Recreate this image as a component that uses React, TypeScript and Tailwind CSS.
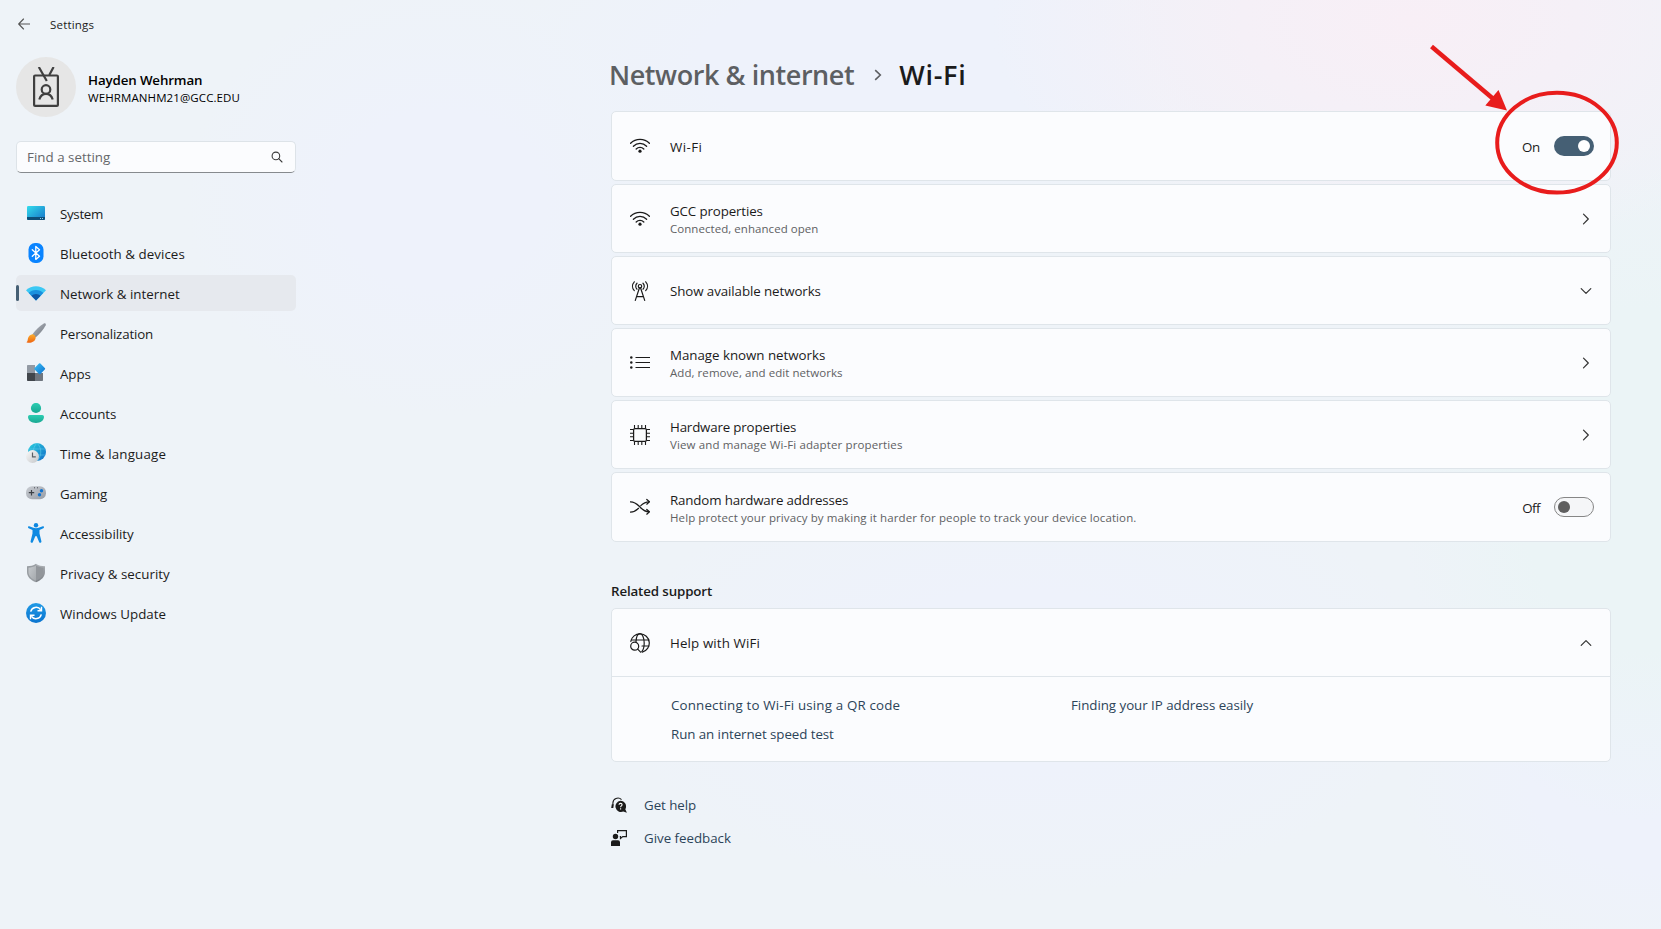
import type { ReactNode } from "react";

type NavItem = { label: string; track: string; icon: ReactNode; active?: boolean };

const Icon20 = ({ children, className = "" }: { children: ReactNode; className?: string }) => (
  <svg width="20" height="20" viewBox="0 0 20 20" fill="none" className={`shrink-0 ${className}`}>
    {children}
  </svg>
);

const SystemIcon = (
  <Icon20>
    <defs>
      <linearGradient id="sysG" x1="0" y1="0" x2="1" y2="1">
        <stop offset="0" stopColor="#33dcec" />
        <stop offset="1" stopColor="#1673c9" />
      </linearGradient>
    </defs>
    <rect x="1" y="3" width="18" height="14" rx="1.2" fill="url(#sysG)" />
    <path d="M1 14h18v1.8A1.2 1.2 0 0 1 17.800 17H2.200A1.200 1.200 0 0 1 1 15.800z" fill="#0e4f79" />
    <path d="M14 15.500h1M16 15.500h1" stroke="#8fd0f0" strokeWidth="1" />
  </Icon20>
);

const BluetoothIcon = (
  <Icon20>
    <rect x="2.500" y="0" width="15" height="20" rx="6.500" fill="#0a84ff" />
    <path d="M6.300 6.700l7.200 6.500-3.700 3.200V3.500l3.700 3.200-7.200 6.500" stroke="#fff" strokeWidth="1.300" strokeLinejoin="round" strokeLinecap="round" />
  </Icon20>
);

const NetworkIcon = (
  <Icon20>
    <defs>
      <clipPath id="netC">
        <path d="M10 17.400L0 7.300C5.500 1.900 14.500 1.900 20 7.300z" />
      </clipPath>
    </defs>
    <g clipPath="url(#netC)">
      <rect width="20" height="20" fill="#3bc8f4" />
      <circle cx="10" cy="17.500" r="10.600" fill="#1b90de" />
      <circle cx="10" cy="17.500" r="6.600" fill="#0f57a5" />
    </g>
  </Icon20>
);

const BrushIcon = (
  <Icon20>
    <defs>
      <linearGradient id="brH" x1="0" y1="0" x2="1" y2="1">
        <stop offset="0" stopColor="#b4b9c1" />
        <stop offset="1" stopColor="#6d737c" />
      </linearGradient>
      <linearGradient id="brT" x1="0" y1="0" x2="0" y2="1">
        <stop offset="0" stopColor="#fcae2e" />
        <stop offset="1" stopColor="#ee6411" />
      </linearGradient>
    </defs>
    <path d="M6.300 11.400C9 7.500 13.500 3 17.800.500c1.200-.6 2.500.5 1.900 1.700C17.500 6.500 13.500 11 9.600 14.600z" fill="url(#brH)" />
    <path d="M5.800 11.400c2-.4 4.200 1.600 3.800 3.800C9 18.900 4 20.800.400 19.200c1.600-1 1.100-2.300 1.600-4 .5-1.900 1.900-3.400 3.800-3.800z" fill="url(#brT)" />
  </Icon20>
);

const AppsIcon = (
  <Icon20>
    <defs>
      <linearGradient id="apG" x1="0" y1="0" x2="1" y2="1">
        <stop offset="0" stopColor="#3cc0f5" />
        <stop offset="1" stopColor="#0b70cf" />
      </linearGradient>
    </defs>
    <path d="M1 2.800A.8.800 0 0 1 1.800 2H9v8H1z" fill="#929aa4" />
    <path d="M1 10h8v8H1.800a.8.800 0 0 1-.8-.8z" fill="#41464c" />
    <path d="M9 10h8v7.200a.8.800 0 0 1-.8.800H9z" fill="#6f767f" />
    <path d="M13 .600a1 1 0 0 1 1.400 0l4.400 4.500a1 1 0 0 1 0 1.400l-4.400 4.500a1 1 0 0 1-1.400 0L8.600 6.500a1 1 0 0 1 0-1.400z" fill="url(#apG)" />
  </Icon20>
);

const AccountsIcon = (
  <Icon20>
    <defs>
      <linearGradient id="acG" x1="0" y1="0" x2="0" y2="1">
        <stop offset="0" stopColor="#2ccdb2" />
        <stop offset="1" stopColor="#18a792" />
      </linearGradient>
    </defs>
    <circle cx="10" cy="5" r="5.100" fill="url(#acG)" />
    <path d="M3.800 12h12.400A1.800 1.800 0 0 1 18 13.800C18 17.600 14.500 20 10 20s-8-2.400-8-6.200A1.800 1.800 0 0 1 3.800 12z" fill="url(#acG)" />
  </Icon20>
);

const TimeIcon = (
  <Icon20>
    <defs>
      <linearGradient id="tiG" x1="0" y1="0" x2="1" y2="1">
        <stop offset="0" stopColor="#2bd0de" />
        <stop offset="1" stopColor="#126cc8" />
      </linearGradient>
      <linearGradient id="tiW" x1="0" y1="0" x2="1" y2="1">
        <stop offset="0" stopColor="#fafafa" />
        <stop offset="1" stopColor="#c4c6c9" />
      </linearGradient>
    </defs>
    <circle cx="11" cy="9" r="9" fill="url(#tiG)" />
    <path d="M2.800 6h16.400M2.800 12h16.400M11 0C6 5 6 13 11 18M11 0c5 5 5 13 0 18" stroke="#6fd7f2" strokeOpacity=".5" strokeWidth=".9" />
    <circle cx="6.500" cy="13.500" r="6.500" fill="url(#tiW)" />
    <path d="M6.500 9.500v4.300H9.800" stroke="#5b5f64" strokeWidth="1.200" />
  </Icon20>
);

const GamingIcon = (
  <Icon20>
    <defs>
      <linearGradient id="gaG" x1="0" y1="0" x2="1" y2="1">
        <stop offset="0" stopColor="#c9cdd3" />
        <stop offset="1" stopColor="#979ca5" />
      </linearGradient>
    </defs>
    <rect x="0" y="3.200" width="20" height="13" rx="6" fill="url(#gaG)" />
    <path d="M5.500 7v5.400M2.800 9.700h5.400" stroke="#3c4046" strokeWidth="1.200" />
    <path d="M8 4.800h1M11 4.800h1" stroke="#4a4e54" strokeWidth="1" />
    <circle cx="15.500" cy="7.700" r="1.700" fill="#1273cf" />
    <circle cx="13.500" cy="11.700" r="1.700" fill="#1273cf" />
  </Icon20>
);

const AccessIcon = (
  <Icon20>
    <circle cx="10" cy="2.200" r="2.200" fill="#0c86e0" />
    <path d="M3.200 3.300l4.200 1.500c1.700.6 3.500.6 5.200 0l4.200-1.500c1.200-.4 1.700 1.400.6 1.900L13.500 7v3.500l1.900 7.800c.3 1.500-1.700 2.200-2.300.7L10.800 13.500c-.2-.7-1.400-.7-1.600 0L6.900 19c-.6 1.500-2.600.8-2.300-.7l1.900-7.800V7L2.600 5.200c-1.100-.5-.6-2.300.6-1.900z" fill="#0f8ae2" />
  </Icon20>
);

const ShieldIcon = (
  <Icon20>
    <defs>
      <linearGradient id="shA" x1="0" y1="0" x2="1" y2="1">
        <stop offset="0" stopColor="#c5c9cd" />
        <stop offset="1" stopColor="#a5a9ad" />
      </linearGradient>
      <linearGradient id="shB" x1="0" y1="0" x2="0" y2="1">
        <stop offset="0" stopColor="#aeb2b7" />
        <stop offset="1" stopColor="#7c8086" />
      </linearGradient>
    </defs>
    <path d="M10 .800c2.700 1.800 5.600 2.500 9 2.500V9c0 4.800-3.600 8.200-9 10.200z" fill="url(#shB)" />
    <path d="M10 .800C7.300 2.600 4.400 3.300 1 3.300V9c0 4.800 3.600 8.200 9 10.200z" fill="#989da2" />
    <path d="M10 2.600C7.600 4 5.200 4.600 2.500 4.700V9c0 4 2.900 6.800 7.500 8.600z" fill="url(#shA)" />
    <path d="M10 2.600c2.400 1.400 4.800 2 7.500 2.100V9c0 4-2.900 6.800-7.500 8.600z" fill="#92969b" />
  </Icon20>
);

const UpdateIcon = (
  <Icon20>
    <defs>
      <linearGradient id="upG" x1="0" y1="0" x2="0" y2="1">
        <stop offset="0" stopColor="#209ae6" />
        <stop offset="1" stopColor="#0b74cf" />
      </linearGradient>
    </defs>
    <circle cx="10" cy="10" r="10" fill="url(#upG)" />
    <path d="M4.700 8.700a5.600 5.600 0 0 1 10-2M15.300 11.300a5.600 5.600 0 0 1-10 2" stroke="#fff" strokeWidth="1.500" />
    <path d="M15.500 3.800v4h-4M4.500 16.200v-4h4" stroke="#fff" strokeWidth="1.400" />
  </Icon20>
);

const nav: NavItem[] = [
  { label: "System", track: "tracking-[-0.31px]", icon: SystemIcon },
  { label: "Bluetooth & devices", track: "tracking-[0.05px]", icon: BluetoothIcon },
  { label: "Network & internet", track: "tracking-[0.02px]", icon: NetworkIcon, active: true },
  { label: "Personalization", track: "tracking-[-0.17px]", icon: BrushIcon },
  { label: "Apps", track: "tracking-[-0.08px]", icon: AppsIcon },
  { label: "Accounts", track: "tracking-[-0.04px]", icon: AccountsIcon },
  { label: "Time & language", track: "tracking-[0.16px]", icon: TimeIcon },
  { label: "Gaming", track: "tracking-[-0.19px]", icon: GamingIcon },
  { label: "Accessibility", track: "tracking-[-0.06px]", icon: AccessIcon },
  { label: "Privacy & security", track: "tracking-[0.03px]", icon: ShieldIcon },
  { label: "Windows Update", track: "tracking-[0.01px]", icon: UpdateIcon },
];

const WifiIcon = (
  <Icon20 className="mb-0.5">
    <path d="M.600 8.300a13.200 13.200 0 0 1 18.800 0M3.400 11.200a9.300 9.300 0 0 1 13.200 0M6.200 14a5.400 5.400 0 0 1 7.600 0" stroke="#1b1b1b" strokeWidth="1.300" strokeLinecap="round" />
    <circle cx="10" cy="16.200" r="1.600" fill="#1b1b1b" />
  </Icon20>
);

const TowerIcon = (
  <Icon20>
    <g stroke="#1b1b1b" strokeWidth="1.200" strokeLinecap="round">
      <circle cx="10" cy="5.200" r="1.700" />
      <path d="M9.400 7L5.300 19.400M10.600 7l4.100 12.400M6.600 15.700h6.800" />
      <path d="M7 8.200a4.200 4.200 0 0 1 0-6M13 8.200a4.200 4.200 0 0 0 0-6M4.300 9.600C1.900 7 1.900 3.400 4.300.800M15.700 9.600c2.400-2.600 2.400-6.200 0-8.800" />
    </g>
  </Icon20>
);

const ListIcon = (
  <Icon20>
    <path d="M5.500 4.500H20M5.500 9.500H20M5.500 14.500H20" stroke="#1b1b1b" strokeWidth="1.200" />
    <circle cx="1.300" cy="4.500" r="1.250" fill="#1b1b1b" />
    <circle cx="1.300" cy="9.500" r="1.250" fill="#1b1b1b" />
    <circle cx="1.300" cy="14.500" r="1.250" fill="#1b1b1b" />
  </Icon20>
);

const ChipIcon = (
  <Icon20>
    <rect x="3.600" y="3.600" width="12.800" height="12.800" rx="1.300" stroke="#1b1b1b" strokeWidth="1.250" />
    <path d="M4.500 0v3.500M8.200 0v3.500M11.800 0v3.500M15.500 0v3.500M4.500 16.500V20M8.200 16.500V20M11.800 16.500V20M15.500 16.500V20M0 4.500h3.500M0 8.200h3.500M0 11.800h3.500M0 15.500h3.500M16.500 4.500H20M16.500 8.200H20M16.500 11.800H20M16.500 15.500H20" stroke="#1b1b1b" strokeWidth="1.100" />
  </Icon20>
);

const ShuffleIcon = (
  <Icon20>
    <path d="M.500 4.800c4.700 0 6.800 2.500 9.300 5s4.200 5 9.200 5M.500 15c4.200 0 6.300-2 8-3.700M10.800 8.600c1.900-1.900 3.800-3.800 8.200-3.800" stroke="#1b1b1b" strokeWidth="1.250" strokeLinecap="round" />
    <path d="M16.800 2.500l2.600 2.300-2.600 2.400M16.800 12.500l2.600 2.300-2.600 2.400" stroke="#1b1b1b" strokeWidth="1.250" strokeLinecap="round" strokeLinejoin="round" />
  </Icon20>
);

const GlobeSearchIcon = (
  <Icon20>
    <g stroke="#1b1b1b" strokeWidth="1.200" strokeLinecap="round">
      <path d="M.800 8.500a9.300 9.300 0 1 1 11.500 10.600" />
      <path d="M1.200 7h17.600M12 13h6.800M6 8.500C6.300 4 7.900.700 10 .700c2.400 0 4.200 4.200 4.200 9.300 0 3.800-.9 7-2.400 8.600" />
      <circle cx="4.700" cy="13.200" r="4" />
      <path d="M7.700 16.200l2.900 3" />
    </g>
  </Icon20>
);

const Chevron = ({ dir }: { dir: "right" | "down" | "up" }) => (
  <svg width="12" height="12" viewBox="0 0 12 12" fill="none" className="mr-0.5">
    <path
      d={dir === "right" ? "M3.500 1.200L8.300 6l-4.800 4.800" : dir === "down" ? "M1.200 3.600L6 8.400l4.800-4.800" : "M1.200 8.400L6 3.600l4.800 4.800"}
      stroke="#333"
      strokeWidth="1.200"
      strokeLinecap="round"
      strokeLinejoin="round"
    />
  </svg>
);

const Toggle = ({ on }: { on?: boolean }) => (
  <div className="flex items-center gap-3.5">
    <span className={on ? "pt-[3px] tracking-[-0.3px]" : "pt-[3px] tracking-[-0.5px]"}>{on ? "On" : "Off"}</span>
    {on ? (
      <span className="flex h-5 w-10 items-center justify-end rounded-full bg-[#455f74] pr-1">
        <span className="size-3 rounded-full bg-white" />
      </span>
    ) : (
      <span className="flex h-5 w-10 items-center rounded-full border border-[#868686] bg-[#f5f6f8] pl-[3px]">
        <span className="size-3 rounded-full bg-[#5f5f5f]" />
      </span>
    )}
  </div>
);

type CardProps = {
  icon: ReactNode;
  title: string;
  titleTrack: string;
  sub?: string;
  subTrack?: string;
  right: ReactNode;
  h?: string;
  titlePad?: string;
};

const RowContent = ({ icon, title, titleTrack, sub, subTrack, right, titlePad = "pt-px" }: CardProps) => (
  <>
    {icon}
    <div className="ml-5 flex flex-1 flex-col">
      <span className={`leading-5 ${titlePad} ${titleTrack}`}>{title}</span>
      {sub && <span className={`text-[11.5px] leading-4 text-[#606163] ${subTrack}`}>{sub}</span>}
    </div>
    {right}
  </>
);

const Card = (p: CardProps) => (
  <div className={`flex items-center rounded-[5px] border border-[#dfe5ea] bg-[#fbfcfe] pl-[18px] pr-4 ${p.h ?? "h-[69px]"}`}>
    <RowContent {...p} />
  </div>
);

export default function App() {
  return (
    <div className="relative flex h-[929px] w-full overflow-hidden bg-[#eef3f8] bg-[radial-gradient(ellipse_420px_240px_at_1410px_20px,#f8eff6_0%,#f5f0f7_40%,transparent_100%),radial-gradient(ellipse_240px_340px_at_1640px_480px,#ebf4f6_0%,#ebf4f6_50%,transparent_100%),radial-gradient(ellipse_260px_220px_at_440px_200px,#eef2fb_0%,#eef2fb_40%,transparent_100%),radial-gradient(ellipse_420px_220px_at_1020px_680px,#eef2fb_0%,#eef2fb_40%,transparent_100%),radial-gradient(ellipse_260px_180px_at_1661px_780px,#eef2fb_0%,#eef2fb_50%,transparent_100%),radial-gradient(ellipse_400px_160px_at_900px_60px,#eef2fb_0%,#eef2fb_50%,transparent_100%)] font-['Open_Sans','Noto_Sans',sans-serif] text-[13.33px] text-[#1b1b1b]">
      <aside className="w-[296px] shrink-0 pl-4">
        <div className="flex h-[57px] items-start gap-5 pt-[15px]">
          <svg width="12" height="12" viewBox="0 0 12 12" fill="none" className="ml-0.5 mt-[3px]">
            <path d="M5.500 1L.700 6l4.800 5M.700 6H12" stroke="#555" strokeWidth="1.100" strokeLinecap="round" strokeLinejoin="round" />
          </svg>
          <span className="pt-0.5 text-[11.5px] leading-4 tracking-[0.2px]">Settings</span>
        </div>

        <div className="flex h-[60px] items-center gap-3">
          <div className="flex size-[60px] items-center justify-center rounded-full bg-[#e6e6e6]">
            <svg width="26" height="40" viewBox="0 0 26 40" fill="none" stroke="#3f3f3f" strokeWidth="2.200">
              <rect x="1.100" y="8.500" width="23.800" height="30.400" rx="1" />
              <path d="M5.800 0l8 14M20.600 0l-4.300 8" />
              <circle cx="13" cy="22.500" r="4.300" />
              <path d="M6.300 32.500c1-3.300 3.500-5.600 6.700-5.600s5.700 2.300 6.700 5.600" />
            </svg>
          </div>
          <div className="flex flex-col text-black">
            <span className="pt-px font-semibold leading-5 tracking-[-0.13px]">Hayden Wehrman</span>
            <span className="text-[11.5px] leading-4 tracking-[0.1px]">WEHRMANHM21@GCC.EDU</span>
          </div>
        </div>

        <div className="mt-6 flex h-8 items-center justify-between rounded-[5px] border border-[#dde3e8] border-b-[#868a8e] bg-[#fbfcfe] pl-2.5 pr-3">
          <span className="pt-0.5 tracking-[0.02px] text-[#65676a]">Find a setting</span>
          <svg width="12" height="12" viewBox="0 0 12 12" fill="none" stroke="#3c3c3c" strokeWidth="1.100" strokeLinecap="round">
            <circle cx="4.900" cy="4.900" r="3.800" />
            <path d="M7.700 7.700l3.300 3.300" />
          </svg>
        </div>

        <nav className="mt-[22px] flex flex-col gap-1">
          {nav.map((n) => (
            <div
              key={n.label}
              className={`relative flex h-9 items-center gap-3.5 rounded-[5px] pl-2.5 ${n.active ? "bg-[#e6e9ee]" : ""}`}
            >
              {n.active && <span className="absolute left-0 top-2.5 h-4 w-[3px] rounded-full bg-[#455f74]" />}
              {n.icon}
              <span className={`pt-0.5 leading-5 ${n.track}`}>{n.label}</span>
            </div>
          ))}
        </nav>
      </aside>

      <main className="ml-[315px] w-[1000px] shrink-0">
        <h1 className="-ml-0.5 flex h-[111px] items-center pt-[39px] text-[27px] font-semibold leading-10">
          <span className="tracking-[-0.43px] text-[#5d5f62]">Network &amp; internet</span>
          <svg width="8" height="12" viewBox="0 0 8 12" fill="none" className="ml-5">
            <path d="M1.200 1.200L6.300 6l-5.100 4.800" stroke="#5d5f62" strokeWidth="1.600" />
          </svg>
          <span className="ml-[17px] tracking-[0.7px]">Wi-Fi</span>
        </h1>

        <div className="flex flex-col gap-[3px]">
          <Card h="h-[70px]" icon={WifiIcon} title="Wi-Fi" titlePad="pt-0.5" titleTrack="tracking-[0.4px]" right={<Toggle on />} />
          <Card icon={WifiIcon} title="GCC properties" titleTrack="tracking-[-0.13px]" sub="Connected, enhanced open" subTrack="tracking-[0.05px]" right={<Chevron dir="right" />} />
          <Card icon={TowerIcon} title="Show available networks" titlePad="pt-0" titleTrack="tracking-[-0.09px]" right={<Chevron dir="down" />} />
          <Card icon={ListIcon} title="Manage known networks" titleTrack="tracking-[-0.03px]" sub="Add, remove, and edit networks" subTrack="tracking-[0.06px]" right={<Chevron dir="right" />} />
          <Card icon={ChipIcon} title="Hardware properties" titleTrack="tracking-[-0.18px]" sub="View and manage Wi-Fi adapter properties" subTrack="tracking-[0.12px]" right={<Chevron dir="right" />} />
          <Card h="h-[70px]" icon={ShuffleIcon} title="Random hardware addresses" titleTrack="tracking-[-0.16px]" sub="Help protect your privacy by making it harder for people to track your device location." subTrack="tracking-[0.1px]" right={<Toggle />} />
        </div>

        <h2 className="mt-[39px] h-[27px] font-semibold leading-5 tracking-[-0.13px]">Related support</h2>

        <section className="h-[154px] rounded-[5px] border border-[#dfe5ea] bg-[#fbfcfe]">
          <div className="flex h-[68px] items-center border-b border-[#dfe5ea] pl-[18px] pr-4">
            <RowContent icon={GlobeSearchIcon} title="Help with WiFi" titlePad="pt-0" titleTrack="tracking-[0.12px]" right={<Chevron dir="up" />} />
          </div>
          <div className="grid grid-cols-[400px_1fr] gap-y-[9px] pl-[59px] pt-[18px] leading-5 text-[#2c4459]">
            <span className="tracking-[0.17px]">Connecting to Wi-Fi using a QR code</span>
            <span className="tracking-[-0.04px]">Finding your IP address easily</span>
            <span className="tracking-[-0.07px]">Run an internet speed test</span>
          </div>
        </section>

        <div className="mt-[33px] flex flex-col gap-[13px] leading-5 text-[#2c4459]">
          <div className="flex h-5 items-center gap-[17px]">
            <svg width="16" height="16" viewBox="0 0 16 16" fill="none">
              <path d="M1.900 8V6.200A5 5 0 0 1 10.500 2.600" stroke="#1b1b1b" strokeWidth="1.100" />
              <path d="M.200 11l.6-3.700 2 .2-.5 3.500z" fill="#1b1b1b" />
              <path d="M9.500 3.800a5.600 5.600 0 0 1 4.800 8.400l1.600 3.600-3.600-1.300A5.600 5.600 0 1 1 9.500 3.800z" fill="#1b1b1b" />
              <path d="M8 7.800c.1-1.900 3.100-1.800 3.100 0 0 1.100-1.500 1.200-1.500 2.400M9.600 11.200v1.200" stroke="#fff" strokeWidth="1.100" />
            </svg>
            <span className="tracking-[-0.06px]">Get help</span>
          </div>
          <div className="flex h-5 items-center gap-[17px]">
            <svg width="16" height="16" viewBox="0 0 16 16" fill="none">
              <circle cx="4.500" cy="6.500" r="2.700" fill="#1b1b1b" />
              <path d="M2 10.300h5a2 2 0 0 1 2 2V16H0v-3.700a2 2 0 0 1 2-2z" fill="#1b1b1b" />
              <path d="M6.600 3V.600h8.800v6h-3.600L9.500 8.500V6.600H8.800" stroke="#1b1b1b" strokeWidth="1.200" />
            </svg>
            <span className="tracking-[-0.02px]">Give feedback</span>
          </div>
        </div>
      </main>

      <svg className="pointer-events-none absolute left-[1420px] top-[36px]" width="210" height="170" viewBox="1420 36 210 170" fill="none">
        <ellipse cx="1557" cy="142.700" rx="59.800" ry="49.900" stroke="#e81c1c" strokeWidth="4" />
        <path d="M1431.500 46.500L1494 99.500" stroke="#e81c1c" strokeWidth="4.500" />
        <path d="M1498.500 90L1507 110.500L1485.300 105.500z" fill="#e81c1c" />
      </svg>
    </div>
  );
}
